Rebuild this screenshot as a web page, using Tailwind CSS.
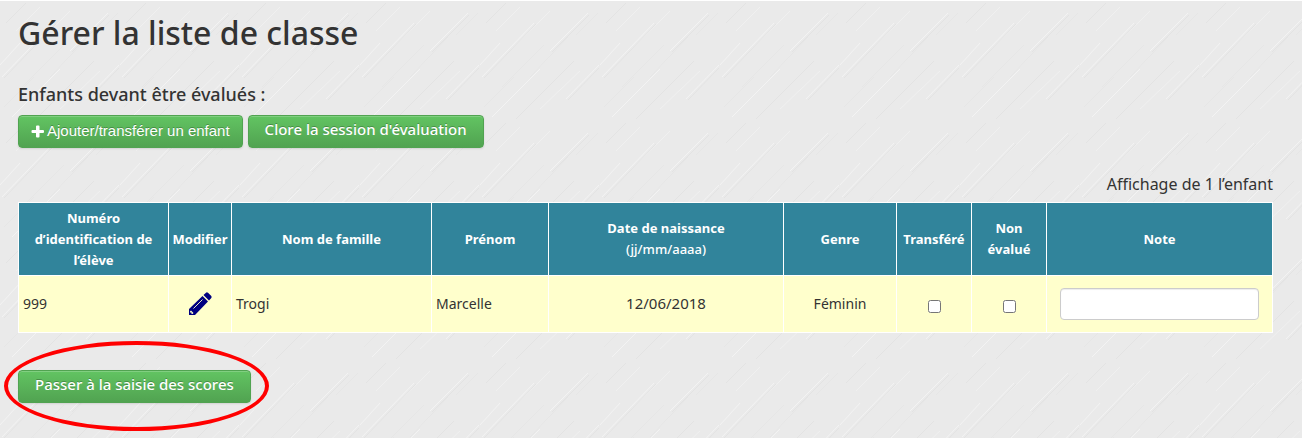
<!DOCTYPE html>
<html lang="fr">
<head>
  <meta charset="UTF-8" />
  <meta name="viewport" content="width=device-width, initial-scale=1.0" />
  <title>Gérer la liste de classe</title>
  <script src="https://cdn.jsdelivr.net/npm/@tailwindcss/browser@4"></script>
</head>
<body class="relative isolate min-h-screen bg-[#eaeaea] border-t border-white text-[#333333] font-['Noto_Sans','Open_Sans',sans-serif]">
  <!-- Fond brossé -->
  <svg class="absolute inset-0 -z-10 w-full h-full" aria-hidden="true">
    <defs>
      <pattern id="stries" width="120" height="120" patternUnits="userSpaceOnUse">
        <g fill="none" stroke="#f3f3f3" stroke-width="1">
          <path d="M2 76L54 22M12 116L60 68M86 98L119 64M0 64L20 42M70 50L108 12" />
          <path d="M30 50L70 10M60 108L100 70M16 30L40 6" stroke="#f0f0f0" />
        </g>
        <g fill="none" stroke="#e3e3e3" stroke-width="1">
          <path d="M4 77L56 23M36 118L94 60M72 51L109 14M88 99L119 67M6 22L26 2" />
          <path d="M22 86L64 44M50 76L88 36M4 106L34 76M96 34L118 12" stroke="#e6e6e6" />
        </g>
      </pattern>
    </defs>
    <rect width="100%" height="100%" fill="url(#stries)" />
  </svg>

  <main class="pl-[18px] pr-[29px] pt-3">
    <h1 class="text-[32px] leading-10 font-medium">Gérer la liste de classe</h1>
    <h2 class="mt-[29px] text-lg leading-6 font-medium">Enfants devant être évalués :</h2>

    <div class="mt-[9px] flex gap-[5px]">
      <button type="button" class="flex h-[33px] items-center gap-[3px] rounded border border-[#51a351] bg-linear-to-b from-[#62c462] to-[#51a351] px-3 font-['Liberation_Sans',sans-serif] text-[15px] text-white shadow-[inset_0_1px_0_rgba(255,255,255,0.2),0_1px_2px_rgba(0,0,0,0.1)] text-shadow-[0_-1px_0_rgba(0,0,0,0.25)]">
        <svg class="size-[13px]" viewBox="0 0 13 13" fill="#ffffff" aria-hidden="true"><path d="M5 1.500Q5 .5 6 .5H7.500Q8.500 .5 8.500 1.500V5H12Q13 5 13 6V7Q13 8 12 8H8.500V11.500Q8.500 12.500 7.500 12.500H6Q5 12.500 5 11.500V8H1.500Q.5 8 .5 7V6Q.5 5 1.500 5H5Z" /></svg>
        Ajouter/transférer un enfant
      </button>
      <button type="button" class="h-[33px] rounded border border-[#51a351] bg-linear-to-b from-[#62c462] to-[#51a351] px-4 pb-1 text-[15px] font-medium text-white shadow-[inset_0_1px_0_rgba(255,255,255,0.2),0_1px_2px_rgba(0,0,0,0.1)] text-shadow-[0_-1px_0_rgba(0,0,0,0.25)]">Clore la session d'évaluation</button>
    </div>

    <p class="mt-6 text-right text-base leading-6">Affichage de 1 l’enfant</p>

    <table class="mt-[6px] w-full table-fixed border-collapse border border-white text-sm">
      <colgroup>
        <col class="w-[150px]" />
        <col class="w-[63px]" />
        <col class="w-[200px]" />
        <col class="w-[117px]" />
        <col class="w-[235px]" />
        <col class="w-[113px]" />
        <col class="w-[75px]" />
        <col class="w-[75px]" />
        <col />
      </colgroup>
      <thead class="bg-[#31849b] text-[13px] text-white">
        <tr class="h-[73px]">
          <th class="border border-white px-1 leading-[21px]">Numéro d’identification de l’élève</th>
          <th class="border border-white leading-[21px]">Modifier</th>
          <th class="border border-white px-1 leading-[21px]">Nom de famille</th>
          <th class="border border-white px-1 leading-[21px]">Prénom</th>
          <th class="border border-white px-1 leading-[21px]">Date de naissance<br /><span class="font-medium">(jj/mm/aaaa)</span></th>
          <th class="border border-white px-1 leading-[21px]">Genre</th>
          <th class="border border-white leading-[21px]">Transféré</th>
          <th class="border border-white px-1 leading-[21px]">Non évalué</th>
          <th class="border border-white px-1 leading-[21px]">Note</th>
        </tr>
      </thead>
      <tbody class="bg-[#ffffcc]">
        <tr class="h-[57px]">
          <td class="border border-white px-1">999</td>
          <td class="border border-white">
            <a href="#" aria-label="Modifier Marcelle Trogi" class="flex justify-center">
              <svg class="size-6" viewBox="0 0 24 24" aria-hidden="true">
                <path fill="#000080" d="M1 23V17L14.500 4L20 9.500L7 23ZM15.500 3L18 .7Q19 0 20 .8L23.300 4Q24 5 23.300 6L21 8.500Z" />
                <path fill="#ffffcc" d="M3 18.500L5.500 21L4.500 22H3.500V20.500H2V19.500Z" />
                <path stroke="#ffffcc" stroke-width=".9" d="M5.500 16.500L14.500 7.500" />
              </svg>
            </a>
          </td>
          <td class="border border-white px-1">Trogi</td>
          <td class="border border-white px-1">Marcelle</td>
          <td class="border border-white px-1 text-center text-[15px]">12/06/2018</td>
          <td class="border border-white px-1 text-center">Féminin</td>
          <td class="border border-white pt-1"><input type="checkbox" aria-label="Transféré" class="mx-auto block size-[13px]" /></td>
          <td class="border border-white pt-1"><input type="checkbox" aria-label="Non évalué" class="mx-auto block size-[13px]" /></td>
          <td class="border border-white px-[13px]"><input type="text" aria-label="Note" class="block h-8 w-full rounded border border-[#cccccc] bg-white px-2 shadow-[inset_0_1px_1px_rgba(0,0,0,0.075)]" /></td>
        </tr>
      </tbody>
    </table>

    <div class="relative mt-[37px] w-fit">
      <button type="button" class="h-[33px] rounded border border-[#51a351] bg-linear-to-b from-[#62c462] to-[#51a351] px-4 pb-1 text-[15px] font-medium text-white shadow-[inset_0_1px_0_rgba(255,255,255,0.2),0_1px_2px_rgba(0,0,0,0.1)] text-shadow-[0_-1px_0_rgba(0,0,0,0.25)]">Passer à la saisie des scores</button>
      <!-- Repère autour du bouton -->
      <div class="pointer-events-none absolute -top-[29px] -left-[14px] -right-[18px] h-[90px] rounded-[50%] border-4 border-[#ff0000]"></div>
    </div>
  </main>
</body>
</html>
